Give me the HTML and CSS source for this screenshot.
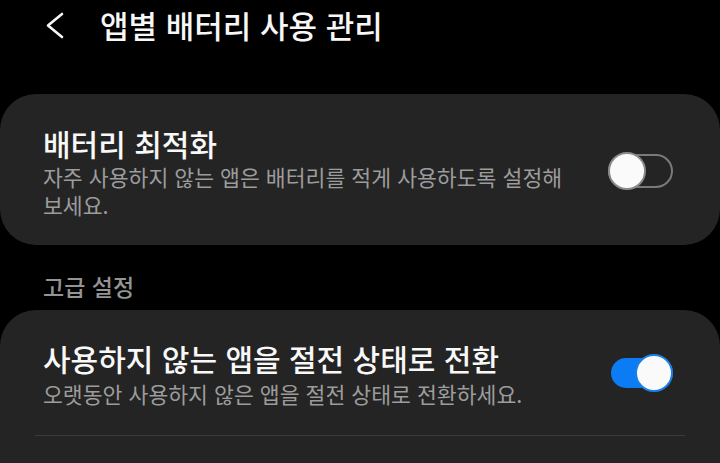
FILE: index.html
```html
<!DOCTYPE html>
<html lang="ko">
<head>
<meta charset="utf-8">
<link rel="stylesheet" href="styles.css">
</head>
<body>
<div class="screen">
  <header class="header">
    <svg class="back" width="24" height="30" viewBox="0 0 24 30">
      <polyline points="17,3 3,14.5 17,26" fill="none" stroke="#f5f5f5" stroke-width="2.6" stroke-linecap="round" stroke-linejoin="round"/>
    </svg>
    <h1 class="title">앱별 배터리 사용 관리</h1>
  </header>

  <section class="card card-top">
    <div class="row">
      <div class="text">
        <div class="item-title">배터리 최적화</div>
        <div class="item-sub">자주 사용하지 않는 앱은 배터리를 적게 사용하도록 설정해 보세요.</div>
      </div>
      <div class="switch off"><span class="thumb"></span></div>
    </div>
  </section>

  <div class="section-label">고급 설정</div>

  <section class="card card-bottom">
    <div class="row row-2">
      <div class="text">
        <div class="item-title">사용하지 않는 앱을 절전 상태로 전환</div>
        <div class="item-sub sub-2">오랫동안 사용하지 않은 앱을 절전 상태로 전환하세요.</div>
      </div>
      <div class="switch on"><span class="thumb"></span></div>
    </div>
    <div class="divider"></div>
  </section>
</div>
</body>
</html>
```

FILE: styles.css
```css
html, body {
  margin: 0;
  padding: 0;
  background: #000;
}
body {
  width: 720px;
  height: 463px;
  overflow: hidden;
  font-family: "Noto Sans CJK KR", "Noto Sans", sans-serif;
  color: #fafafa;
}
.screen {
  display: flex;
  flex-direction: column;
}
.header {
  height: 50px;
  display: flex;
  align-items: center;
  padding-left: 45px;
}
.back {
  display: block;
  margin-top: 1px;
}
.title {
  margin: 0 0 0 31px;
  font-size: 31px;
  font-weight: 500;
  line-height: 50px;
  color: #f7f7f7;
}
.card {
  background: #242424;
  border-radius: 36px;
}
.card-top {
  margin-top: 44px;
  padding: 29px 47px 26px 43px;
}
.card-bottom {
  box-sizing: border-box;
  padding: 28px 35px 0 35px;
  border-bottom-left-radius: 0;
  border-bottom-right-radius: 0;
  height: 153px;
}
.row {
  display: flex;
  align-items: center;
  gap: 20px;
}
.row-2 {
  padding: 0 12px 27px 8px;
}
.text {
  flex: 1;
  min-width: 0;
}
.item-title {
  font-size: 30px;
  line-height: 40px;
  font-weight: 500;
  color: #f8f8f8;
}
.item-sub {
  font-size: 21.6px;
  line-height: 28px;
  color: #9c9c9c;
  word-break: keep-all;
}
.sub-2 {
  margin-top: 2px;
}
.section-label {
  margin: 26px 0 9px 43px;
  font-size: 23px;
  line-height: 30px;
  font-weight: 500;
  color: #949494;
}
.switch {
  position: relative;
  width: 65px;
  height: 34px;
  box-sizing: border-box;
  border-radius: 17px;
  flex-shrink: 0;
}
.switch.off {
  border: 2px solid #7a7a7a;
}
.switch.on {
  background: #0b7cf4;
  height: 30px;
  width: 62px;
  border-radius: 15px;
  margin-left: 3px;
}
.thumb {
  position: absolute;
  width: 38px;
  height: 38px;
  box-sizing: border-box;
  border-radius: 50%;
  background: #fafafa;
}
.switch.off .thumb {
  left: -2px;
  top: -4px;
  border: 2px solid #8a8a8a;
}
.switch.on .thumb {
  right: 0;
  top: -4px;
  border: 2px solid #1a7fe8;
}
.divider {
  height: 1px;
  background: #3a3a3a;
}
```
